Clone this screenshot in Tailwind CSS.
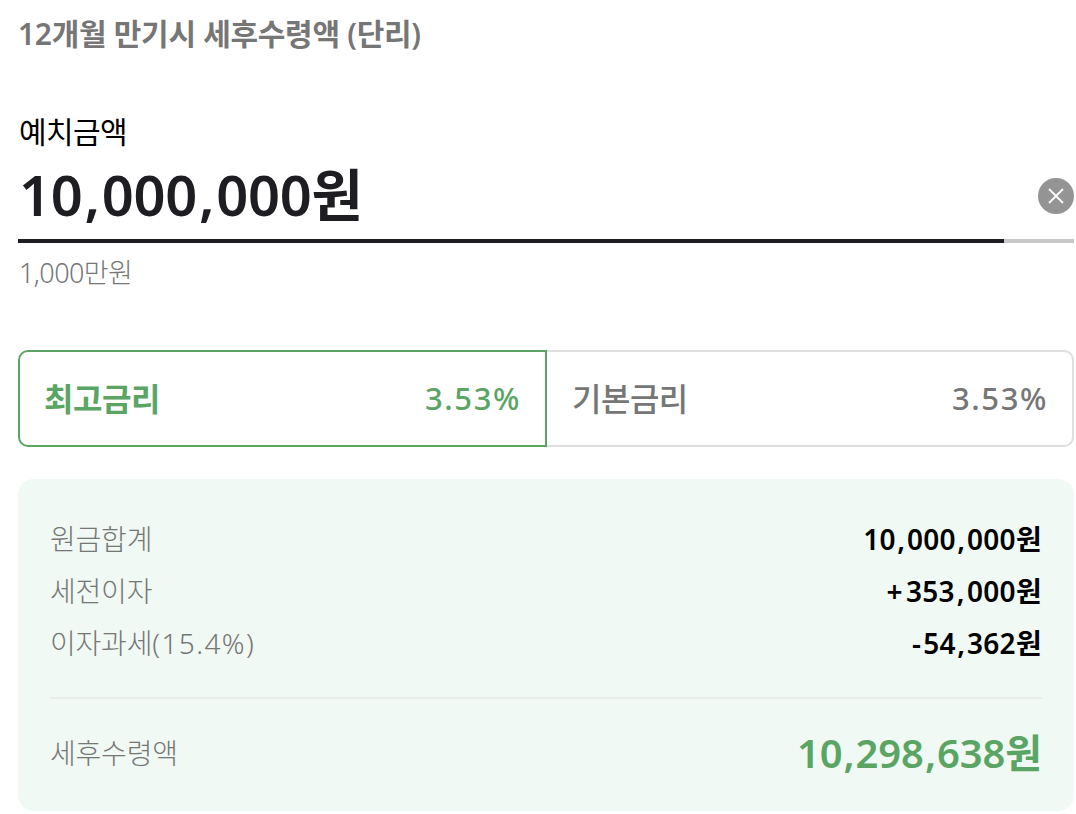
<!DOCTYPE html>
<html lang="ko"><head><meta charset="utf-8"><script src="https://cdn.jsdelivr.net/npm/@tailwindcss/browser@4"></script></head>
<body class="bg-white overflow-hidden font-['Noto_Sans','Noto_Sans_CJK_KR',sans-serif]">
<div class="w-[1076px] h-[814px] pl-[18px] pr-[2px] flex flex-col">
  <h1 class="h-[70px] pt-[14px] text-[30px] leading-[40px] font-semibold text-[#767676] tracking-[-0.3px]">12개월 만기시 세후수령액 (단리)</h1>
  <div class="mt-[42px] pl-[1px] text-[30px] leading-[40px] font-normal text-black tracking-[-0.6px] h-[36px]">예치금액</div>
  <div class="flex items-center justify-between h-[91px]">
    <div class="pl-[1px] text-[56px] leading-[72px] font-semibold text-[#1e1e22] tracking-[-0.3px]">10<span class="mx-[2px]">,</span>000<span class="mx-[2px]">,</span>000원</div>
    <div class="mt-[5px] w-9 h-9 rounded-full bg-[#949494] flex items-center justify-center">
      <svg width="18" height="18" viewBox="0 0 18 18" fill="none" stroke="#fff" stroke-width="1.8"><path d="M2 2 16 16M16 2 2 16"/></svg>
    </div>
  </div>
  <div class="h-1 bg-[#c8c8c8]"><div class="h-full w-[986px] bg-[#1e1e22]"></div></div>
  <div class="mt-[10px] pl-[1px] text-[27px] leading-[40px] font-light text-[#767676] tracking-[-0.6px]">1,000만원</div>
  <div class="mt-[57px] flex h-[97px]">
    <div class="w-[529px] border-2 border-[#5ba564] rounded-l-[10px] flex items-center justify-between pl-[24px] pr-[24px] text-[#5ba564]">
      <span class="text-[32px] font-semibold tracking-[-0.4px]">최고금리</span><span class="text-[31px] font-medium tracking-[1.6px]">3.53%</span>
    </div>
    <div class="flex-1 border-2 border-l-0 border-[#dfdfdf] rounded-r-[10px] flex items-center justify-between pl-[25px] pr-[24px] text-[#767676]">
      <span class="text-[32px] font-medium tracking-[-0.5px]">기본금리</span><span class="text-[31px] font-medium tracking-[1.6px]">3.53%</span>
    </div>
  </div>
  <div class="mt-[32px] h-[332px] rounded-[16px] bg-[#f0f9f3] px-[32px] pt-[34px]">
    <div class="flex flex-col h-[186px] border-b-2 border-[#e9f0eb]">
      <div class="flex justify-between items-center h-[52px]"><span class="text-[28px] font-light text-[#767676] tracking-[-0.2px]">원금합계</span><span class="text-[28px] font-semibold text-black tracking-[0.3px]">10<span class="mx-[1.5px]">,</span>000<span class="mx-[1.5px]">,</span>000원</span></div>
      <div class="flex justify-between items-center h-[52px]"><span class="text-[28px] font-light text-[#767676] tracking-[-0.2px]">세전이자</span><span class="text-[28px] font-semibold text-black tracking-[0.3px]"><span class="mr-[3px]">+</span>353<span class="mx-[2px]">,</span>000원</span></div>
      <div class="flex justify-between items-center h-[52px]"><span class="text-[28px] font-light text-[#767676] tracking-[-0.2px]">이자과세<span class="tracking-[1.4px]">(15.4%)</span></span><span class="text-[28px] font-semibold text-black tracking-[0.3px]"><span class="mr-[2px]">-</span>54<span class="mx-[1.5px]">,</span>362원</span></div>
    </div>
    <div class="flex justify-between items-center h-[107px]"><span class="text-[28px] font-light text-[#767676] tracking-[-0.2px]">세후수령액</span><span class="text-[40px] font-semibold text-[#5ba564] tracking-[-0.1px]">10<span class="mx-[1px]">,</span>298<span class="mx-[1px]">,</span>638원</span></div>
  </div>
</div>
</body></html>
